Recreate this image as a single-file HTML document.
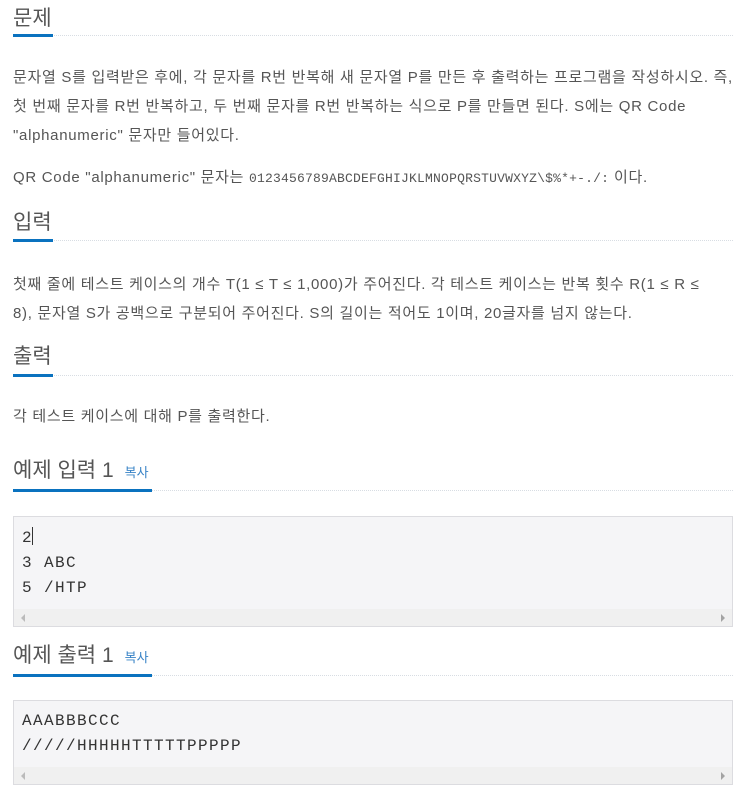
<!DOCTYPE html>
<html><head><meta charset="utf-8"><style>
body{margin:0;width:756px;height:804px;background:#fff;position:relative;overflow:hidden;font-family:"Liberation Sans","Noto Sans CJK KR",sans-serif;color:#555;}
.a{position:absolute;white-space:nowrap;}
.h{font-size:21px;color:#555;}
.p{font-size:15px;left:13px;letter-spacing:0.7px;}
.dot{position:absolute;left:13px;width:720px;border-top:1px dotted #d8dde3;}
.ul{position:absolute;left:13px;height:3px;background:#0a72bf;}
.m{font-family:"Liberation Mono","DejaVu Sans Mono",monospace;font-size:13px;letter-spacing:0.2px;}
.pre{position:absolute;left:13px;width:718px;background:#f5f5f7;border:1px solid #dcdce0;}
.sb{position:absolute;left:0;right:0;bottom:0;height:17px;background:#f0f0f0;}
.tl,.tr{position:absolute;top:5px;width:0;height:0;border-top:4px solid transparent;border-bottom:4px solid transparent;}
.tl{left:7px;border-right:4px solid #bbb;}
.tr{right:7px;border-left:4px solid #a3a3a3;}
.code{position:absolute;left:8px;font-family:"Liberation Mono","DejaVu Sans Mono",monospace;font-size:16px;letter-spacing:1.4px;color:#333;line-height:25px;white-space:pre;}
.cp{font-size:13px;color:#3a84c7;margin-left:11px;}
</style></head><body>
<div class="a h" style="left:13px;top:2px;">문제</div>
<div class="dot" style="top:35px"></div><div class="ul" style="top:34px;width:40px"></div>
<div class="a p" style="top:66px">문자열 S를 입력받은 후에, 각 문자를 R번 반복해 새 문자열 P를 만든 후 출력하는 프로그램을 작성하시오. 즉,</div>
<div class="a p" style="top:95px">첫 번째 문자를 R번 반복하고, 두 번째 문자를 R번 반복하는 식으로 P를 만들면 된다. S에는 QR Code</div>
<div class="a p" style="top:124px">"alphanumeric" 문자만 들어있다.</div>
<div class="a p" style="top:166px">QR Code "alphanumeric" 문자는 <span class="m">0123456789ABCDEFGHIJKLMNOPQRSTUVWXYZ\$%*+-./:</span> 이다.</div>
<div class="a h" style="left:13px;top:206px;">입력</div>
<div class="dot" style="top:240px"></div><div class="ul" style="top:239px;width:40px"></div>
<div class="a p" style="top:273px">첫째 줄에 테스트 케이스의 개수 T(1 ≤ T ≤ 1,000)가 주어진다. 각 테스트 케이스는 반복 횟수 R(1 ≤ R ≤</div>
<div class="a p" style="top:302px">8), 문자열 S가 공백으로 구분되어 주어진다. S의 길이는 적어도 1이며, 20글자를 넘지 않는다.</div>
<div class="a h" style="left:13px;top:340px;">출력</div>
<div class="dot" style="top:375px"></div><div class="ul" style="top:374px;width:40px"></div>
<div class="a p" style="top:405px">각 테스트 케이스에 대해 P를 출력한다.</div>
<div class="a h" style="left:13px;top:454px;">예제 입력 1<span class="cp">복사</span></div>
<div class="dot" style="top:490px"></div><div class="ul" style="top:489px;width:139px"></div>
<div class="pre" style="top:516px;height:109px;">
<div class="code" style="top:9px">2<span style="display:inline-block;width:1px;height:18px;background:#333;vertical-align:-3px;margin-left:-1px"></span>
3 ABC
5 /HTP</div>
<div class="sb"><div class="tl"></div><div class="tr"></div></div></div>
<div class="a h" style="left:13px;top:639px;">예제 출력 1<span class="cp">복사</span></div>
<div class="dot" style="top:675px"></div><div class="ul" style="top:674px;width:139px"></div>
<div class="pre" style="top:700px;height:83px;">
<div class="code" style="top:8px">AAABBBCCC
/////HHHHHTTTTTPPPPP</div>
<div class="sb"><div class="tl"></div><div class="tr"></div></div></div>
</body></html>
